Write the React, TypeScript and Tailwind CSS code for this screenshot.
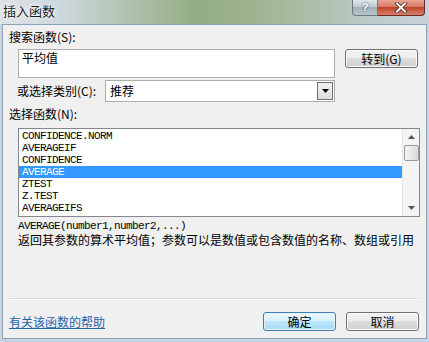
import React from "react";

const cjk = { fontFamily: '"Noto Sans CJK SC", "Liberation Sans", sans-serif' };
const mono = { fontFamily: '"Liberation Mono", "DejaVu Sans Mono", monospace' };

const items = [
  "CONFIDENCE.NORM",
  "AVERAGEIF",
  "CONFIDENCE",
  "AVERAGE",
  "ZTEST",
  "Z.TEST",
  "AVERAGEIFS",
];

function Btn({ label, primary }: { label: string; primary?: boolean }) {
  return (
    <div
      className={
        "w-[73px] h-[19px] rounded-[3px] border flex items-center justify-center text-[12px] leading-none text-black " +
        (primary
          ? "border-[#3c7fb1] bg-[linear-gradient(#eaf6fd,#d9f0fc_50%,#bee6fd_50%,#a7d9f5)] shadow-[inset_0_0_0_1px_#e8f4fc]"
          : "border-[#707070] bg-[linear-gradient(#f2f2f2,#ebebeb_50%,#dddddd_50%,#cfcfcf)] shadow-[inset_0_0_0_1px_#fcfcfc]")
      }
      style={cjk}
    >
      {label}
    </div>
  );
}

export default function App() {
  return (
    <div className="w-[429px] h-[342px] overflow-hidden bg-[#c5d5e4] flex flex-col select-none" style={cjk}>
      {/* Title bar */}
      <div className="h-[24px] shrink-0 flex items-start justify-between bg-[linear-gradient(90deg,#dfe4e6_0%,#cdd8de_14%,#b0c2ae_30%,#93ad84_46%,#9fb590_60%,#afc0aa_74%,#bccacb_86%,#c8d3d8_100%)]">
        <div className="pl-[3px] pt-[3px] text-[13px] leading-[16px] text-[#1a1a1a] [text-shadow:0_0_6px_#ffffff,0_0_3px_#ffffff]">插入函数</div>
        <div className="flex mr-[4px]">
          <div className="w-[26px] h-[16px] rounded-bl-[4px] border border-t-0 border-[#6b7a80] bg-[linear-gradient(#dfe6e9,#b9c5ca_50%,#9fb0b7_50%,#b9c8cd)] flex items-center justify-center text-[11px] font-bold text-white leading-none [text-shadow:0_0_2px_#33444a]" style={{ fontFamily: '"Liberation Sans", sans-serif' }}>
            ?
          </div>
          <div className="w-[47px] h-[16px] rounded-br-[4px] border border-l-0 border-t-0 border-[#6e2a22] bg-[linear-gradient(#e8a493,#d27661_50%,#c0442b_50%,#d4826c)] flex items-center justify-center">
            <svg width="14" height="11" viewBox="0 0 14 11">
              <path d="M3 1.5 L11 9.5 M11 1.5 L3 9.5" stroke="#3a1a14" strokeWidth="3.4" strokeLinecap="square" />
              <path d="M3 1.5 L11 9.5 M11 1.5 L3 9.5" stroke="#ffffff" strokeWidth="2" strokeLinecap="square" />
            </svg>
          </div>
        </div>
      </div>

      {/* Body */}
      <div className="mx-[2px] mb-[3px] flex-1 bg-[#f0f0f0] border border-[#8ea2b6] flex flex-col pl-[6px] pr-[7px]">
        <div className="mt-[5px] h-[14px] text-[12px] leading-[14px] text-black">搜索函数(S):</div>

        <div className="mt-[5px] flex items-start pl-[9px]">
          <div className="w-[317px] h-[29px] bg-white border border-[#abadb3] px-[3px] text-[12px] leading-[14px] pt-[1px] text-black">平均值</div>
          <div className="ml-[10px]">
            <Btn label="转到(G)" />
          </div>
        </div>

        <div className="mt-[2px] h-[22px] flex items-center pl-[8px]">
          <div className="w-[88px] text-[12px] leading-[14px] text-black">或选择类别(C):</div>
          <div className="w-[230px] h-[22px] bg-white border border-[#abadb3] flex items-center justify-between pl-[4px] pr-[1px]">
            <span className="text-[12px] leading-[14px] text-black">推荐</span>
            <div className="w-[16px] h-[18px] border border-[#707070] bg-[linear-gradient(#f2f2f2,#dcdcdc)] flex items-center justify-center">
              <svg width="7" height="4" viewBox="0 0 7 4"><path d="M0 0 H7 L3.5 4 Z" fill="#000" /></svg>
            </div>
          </div>
        </div>

        <div className="mt-[5px] h-[14px] text-[12px] leading-[14px] text-black">选择函数(N):</div>

        <div className="mt-[7px] ml-[9px] w-[402px] h-[89px] bg-white border border-[#828790] flex">
          <div className="flex-1 pt-[1px]">
            {items.map((it, i) => (
              <div
                key={it}
                className={
                  "h-[12px] leading-[12px] pl-[3px] text-[11px] tracking-[-0.6px] whitespace-pre " +
                  (i === 3 ? "bg-[#3399ff] text-white" : "text-black")
                }
                style={mono}
              >
                {it}
              </div>
            ))}
          </div>
          <div className="w-[17px] bg-[#f4f4f4] border-l border-[#e6e6e6] flex flex-col items-center">
            <div className="h-[16px] flex items-center justify-center">
              <svg width="7" height="4" viewBox="0 0 7 4"><path d="M0 4 H7 L3.5 0 Z" fill="#555" /></svg>
            </div>
            <div className="w-[15px] h-[16px] rounded-[2px] border border-[#9a9a9a] bg-[linear-gradient(90deg,#f3f3f3,#e8e8e8_50%,#d8d8d8)]" />
            <div className="flex-1" />
            <div className="h-[16px] flex items-center justify-center">
              <svg width="7" height="4" viewBox="0 0 7 4"><path d="M0 0 H7 L3.5 4 Z" fill="#555" /></svg>
            </div>
          </div>
        </div>

        <div className="mt-[3px] ml-[9px] h-[12px] leading-[12px] text-[11px] tracking-[-0.6px] text-black whitespace-pre" style={mono}>
          AVERAGE(number1,number2,...)
        </div>
        <div className="ml-[9px] h-[16px] leading-[16px] text-[12px] text-black whitespace-nowrap">
          返回其参数的算术平均值；参数可以是数值或包含数值的名称、数组或引用
        </div>

        <div className="mt-[50px] h-[1px] bg-[#dcdcdc] border-b border-white box-content" />

        <div className="mt-[12px] flex items-center">
          <div className="text-[12px] leading-[14px] text-[#1c64a8] underline">有关该函数的帮助</div>
          <div className="flex-1" />
          <Btn label="确定" primary />
          <div className="ml-[10px]">
            <Btn label="取消" />
          </div>
        </div>
      </div>
    </div>
  );
}
